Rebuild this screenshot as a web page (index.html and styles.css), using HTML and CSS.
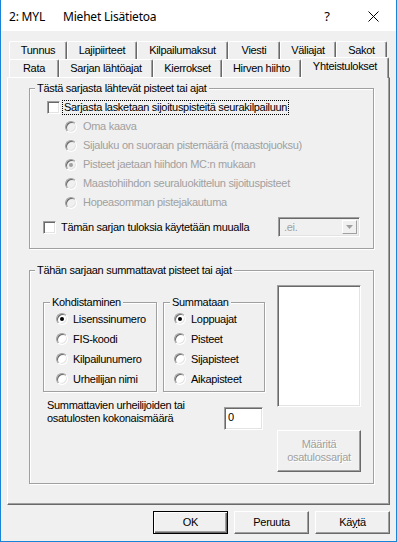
FILE: index.html
```html
<!DOCTYPE html>
<html lang="fi">
<head>
    <meta charset="UTF-8">
    <title>2: MYL Miehet Lisätietoa</title>
    <link rel="stylesheet" href="styles.css">
</head>
<body>
    <div class="window">
        <div class="titlebar">
            <span class="title-id">2: MYL</span>
            <span class="title-name">Miehet Lisätietoa</span>
            <span class="title-btn title-help">?</span>
            <span class="title-btn title-close">
                <svg width="11" height="11" viewBox="0 0 11 11">
                    <path d="M0.5 0.5 L10.5 10.5 M10.5 0.5 L0.5 10.5" stroke="#000" stroke-width="1" fill="none"/>
                </svg>
            </span>
        </div>

        <div class="client">
            <div class="tab-row back">
                <div class="tab">Tunnus</div>
                <div class="tab">Lajipiirteet</div>
                <div class="tab">Kilpailumaksut</div>
                <div class="tab">Viesti</div>
                <div class="tab">Väliajat</div>
                <div class="tab">Sakot</div>
            </div>
            <div class="tab-row front">
                <div class="tab">Rata</div>
                <div class="tab">Sarjan lähtöajat</div>
                <div class="tab">Kierrokset</div>
                <div class="tab">Hirven hiihto</div>
                <div class="tab active">Yhteistulokset</div>
            </div>

            <div class="panel">
                <fieldset class="group group-source">
                    <legend>Tästä sarjasta lähtevät pisteet tai ajat</legend>
                    <div class="source-body">
                        <div class="row check-row">
                            <span class="checkbox"></span>
                            <span class="focus-label">Sarjasta lasketaan sijoituspisteitä seurakilpailuun</span>
                        </div>
                        <div class="row radio-row disabled">
                            <span class="radio"></span>
                            <span>Oma kaava</span>
                        </div>
                        <div class="row radio-row disabled">
                            <span class="radio"></span>
                            <span>Sijaluku on suoraan pistemäärä (maastojuoksu)</span>
                        </div>
                        <div class="row radio-row disabled">
                            <span class="radio on"></span>
                            <span>Pisteet jaetaan hiihdon MC:n mukaan</span>
                        </div>
                        <div class="row radio-row disabled">
                            <span class="radio"></span>
                            <span>Maastohiihdon seuraluokittelun sijoituspisteet</span>
                        </div>
                        <div class="row radio-row disabled">
                            <span class="radio"></span>
                            <span>Hopeasomman pistejakautuma</span>
                        </div>
                        <div class="row elsewhere-row">
                            <span class="checkbox"></span>
                            <span class="elsewhere-label">Tämän sarjan tuloksia käytetään muualla</span>
                            <div class="combo">
                                <span class="combo-text">.ei.</span>
                                <span class="combo-btn">
                                    <svg width="7" height="4" viewBox="0 0 7 4"><path d="M0 0 H7 L3.5 4 Z" fill="#a0a0a0"/></svg>
                                </span>
                            </div>
                        </div>
                    </div>
                </fieldset>

                <fieldset class="group group-sum">
                    <legend>Tähän sarjaan summattavat pisteet tai ajat</legend>
                    <div class="sum-body">
                        <div class="sum-left">
                            <div class="sub-groups">
                                <fieldset class="group sub-group target">
                                    <legend>Kohdistaminen</legend>
                                    <div class="row sub-row"><span class="radio on"></span><span>Lisenssinumero</span></div>
                                    <div class="row sub-row"><span class="radio"></span><span>FIS-koodi</span></div>
                                    <div class="row sub-row"><span class="radio"></span><span>Kilpailunumero</span></div>
                                    <div class="row sub-row"><span class="radio"></span><span>Urheilijan nimi</span></div>
                                </fieldset>
                                <fieldset class="group sub-group summed">
                                    <legend>Summataan</legend>
                                    <div class="row sub-row"><span class="radio on"></span><span>Loppuajat</span></div>
                                    <div class="row sub-row"><span class="radio"></span><span>Pisteet</span></div>
                                    <div class="row sub-row"><span class="radio"></span><span>Sijapisteet</span></div>
                                    <div class="row sub-row"><span class="radio"></span><span>Aikapisteet</span></div>
                                </fieldset>
                            </div>
                            <div class="count-row">
                                <span class="count-label">Summattavien urheilijoiden tai<br>osatulosten kokonaismäärä</span>
                                <span class="edit">0</span>
                            </div>
                        </div>
                        <div class="sum-right">
                            <div class="listbox"></div>
                            <div class="button disabled">Määritä<br>osatulossarjat</div>
                        </div>
                    </div>
                </fieldset>
            </div>

            <div class="dialog-buttons">
                <div class="button default">OK</div>
                <div class="button">Peruuta</div>
                <div class="button">Kä<u>y</u>tä</div>
            </div>
        </div>
    </div>
</body>
</html>
```

FILE: styles.css
```css
:root {
    --face: #f0f0f0;
    --light: #e3e3e3;
    --shadow: #a0a0a0;
    --dark-shadow: #696969;
    --gray-text: #a0a0a0;
    --frame: #1883d7;
}

* {
    box-sizing: border-box;
}

body {
    margin: 0;
    background: #fff;
    font-family: "Liberation Sans", Arial, sans-serif;
    font-size: 11px;
    line-height: 13px;
    letter-spacing: -0.3px;
    color: #000;
}

.window {
    width: 397px;
    height: 542px;
    border: 1px solid var(--frame);
    border-top: none;
    background: var(--face);
    display: flex;
    flex-direction: column;
}

/* title bar */
.titlebar {
    height: 31px;
    background: #fff;
    display: flex;
    align-items: center;
    padding: 1px 0 0 8px;
    font-family: "Noto Sans", "Liberation Sans", sans-serif;
    font-size: 12px;
    letter-spacing: -0.2px;
}

.title-id {
    width: 54px;
}

.title-name {
    flex: 1;
}

.title-btn {
    width: 46px;
    height: 30px;
    display: flex;
    align-items: center;
    justify-content: center;
}

.title-help {
    font-size: 13px;
}

/* client area */
.client {
    flex: 1;
    padding: 10px 6px 0 6px;
    display: flex;
    flex-direction: column;
}

.tab-row {
    display: flex;
    height: 18px;
    margin-left: 2px;
    align-items: flex-end;
}

.tab {
    height: 18px;
    background: var(--face);
    border-top: 1px solid #fff;
    border-left: 1px solid #fff;
    border-right: 1px solid var(--dark-shadow);
    box-shadow: inset -1px 0 var(--shadow);
    border-radius: 2px 2px 0 0;
    display: flex;
    align-items: center;
    justify-content: center;
    white-space: nowrap;
}

.back .tab:nth-child(1) { width: 58px; }
.back .tab:nth-child(2) { width: 70px; }
.back .tab:nth-child(3) { width: 91px; }
.back .tab:nth-child(4) { width: 52px; }
.back .tab:nth-child(5) { width: 56px; }
.back .tab:nth-child(6) { width: 51px; }

.front .tab:nth-child(1) { width: 50px; }
.front .tab:nth-child(2) { width: 94px; }
.front .tab:nth-child(3) { width: 69px; }
.front .tab:nth-child(4) { width: 79px; }
.front .tab:nth-child(5) { width: 88px; }

.tab.active {
    height: 21px;
    margin-bottom: -1px;
    align-items: flex-start;
    padding-top: 2px;
    position: relative;
    z-index: 1;
}

.panel {
    height: 428px;
    border: 1px solid;
    border-color: #fff var(--dark-shadow) var(--dark-shadow) #fff;
    box-shadow: inset -1px -1px var(--shadow);
    padding: 4px 0 0 21px;
}

/* group boxes */
.group {
    margin: 0;
    padding: 0;
    min-width: 0;
    border: 1px solid var(--shadow);
    box-shadow: inset 1px 1px #fff, 1px 1px #fff;
}

.group legend {
    padding: 0 2px;
    margin-left: 5px;
    line-height: 13px;
    background: var(--face);
}

.group-source,
.group-sum {
    width: 345px;
}

.row {
    display: flex;
    align-items: center;
    white-space: nowrap;
}

.source-body {
    padding: 3px 13px 11px 0;
}

.check-row {
    height: 19px;
    padding-left: 17px;
}

.focus-label {
    margin-left: 3px;
    padding: 0 1px;
    outline: 1px dotted #000;
}

.radio-row {
    height: 19px;
    padding-left: 35px;
    gap: 6px;
}

.disabled {
    color: var(--gray-text);
}

.elsewhere-row {
    height: 20px;
    margin-top: 5px;
    padding-left: 13px;
}

.elsewhere-label {
    margin-left: 5px;
}

/* controls */
.checkbox {
    width: 13px;
    height: 13px;
    flex: none;
    background: #fff;
    border: 1px solid;
    border-color: var(--shadow) #fff #fff var(--shadow);
    box-shadow: inset 1px 1px var(--dark-shadow), inset -1px -1px var(--light);
}

.radio {
    width: 12px;
    height: 12px;
    flex: none;
    border-radius: 50%;
    background: #fff;
    border: 1px solid;
    border-color: var(--shadow) #fff #fff var(--shadow);
    box-shadow: inset 1px 1px var(--dark-shadow), inset -1px -1px var(--light);
    position: relative;
}

.radio.on::after {
    content: "";
    position: absolute;
    left: 3px;
    top: 3px;
    width: 4px;
    height: 4px;
    border-radius: 50%;
    background: #000;
}

.disabled .radio {
    background: var(--face);
}

.disabled .radio.on::after {
    background: var(--gray-text);
}

.combo {
    width: 82px;
    height: 20px;
    margin-left: auto;
    border: 1px solid;
    border-color: var(--shadow) #fff #fff var(--shadow);
    box-shadow: inset 1px 1px var(--dark-shadow), inset -1px -1px var(--light);
    display: flex;
    align-items: center;
    padding: 2px;
}

.combo-text {
    flex: 1;
    padding-left: 3px;
    color: var(--gray-text);
}

.combo-btn {
    width: 15px;
    height: 14px;
    display: flex;
    align-items: center;
    justify-content: center;
    border: 1px solid;
    border-color: #fff var(--shadow) var(--shadow) #fff;
}

.group-sum {
    margin-top: 15px;
}

.sum-body {
    display: flex;
    align-items: flex-start;
    gap: 12px;
    padding: 8px 12px 11px 13px;
}

.sum-left {
    width: 222px;
}

.sub-groups {
    display: flex;
    gap: 6px;
    margin-top: 11px;
}

.sub-group {
    padding-bottom: 2px;
}

.sub-group legend {
    margin-left: 6px;
}

.target {
    width: 114px;
}

.summed {
    width: 102px;
}

.sub-row {
    height: 20px;
    gap: 5px;
}

.target .sub-row {
    padding-left: 12px;
}

.summed .sub-row {
    padding-left: 10px;
}

.count-row {
    display: flex;
    justify-content: space-between;
    align-items: flex-start;
    margin-top: 7px;
}

.count-label {
    padding-left: 4px;
}

.edit {
    width: 39px;
    height: 23px;
    margin: 8px 2px 0 0;
    padding: 3px 0 0 3px;
    background: #fff;
    border: 1px solid;
    border-color: var(--shadow) #fff #fff var(--shadow);
    box-shadow: inset 1px 1px var(--dark-shadow), inset -1px -1px var(--light);
}

.sum-right {
    width: 84px;
    display: flex;
    flex-direction: column;
}

.listbox {
    height: 122px;
    background: #fff;
    border: 1px solid;
    border-color: var(--shadow) #fff #fff var(--shadow);
    box-shadow: inset 1px 1px var(--dark-shadow), inset -1px -1px var(--light);
}

/* push buttons */
.button {
    height: 23px;
    width: 75px;
    border: 1px solid;
    border-color: #fff var(--dark-shadow) var(--dark-shadow) #fff;
    box-shadow: inset -1px -1px var(--shadow);
    background: var(--face);
    display: flex;
    align-items: center;
    justify-content: center;
    text-align: center;
}

.button.default {
    border: 1px solid #000;
    box-shadow: inset 1px 1px #fff, inset -1px -1px var(--dark-shadow), inset -2px -2px var(--shadow);
}

.sum-right .button {
    width: 84px;
    height: 42px;
    margin-top: 23px;
}

.button.disabled {
    color: var(--gray-text);
    text-shadow: 1px 1px #fff;
}

.dialog-buttons {
    display: flex;
    justify-content: flex-end;
    gap: 6px;
    margin-top: 6px;
}
```
